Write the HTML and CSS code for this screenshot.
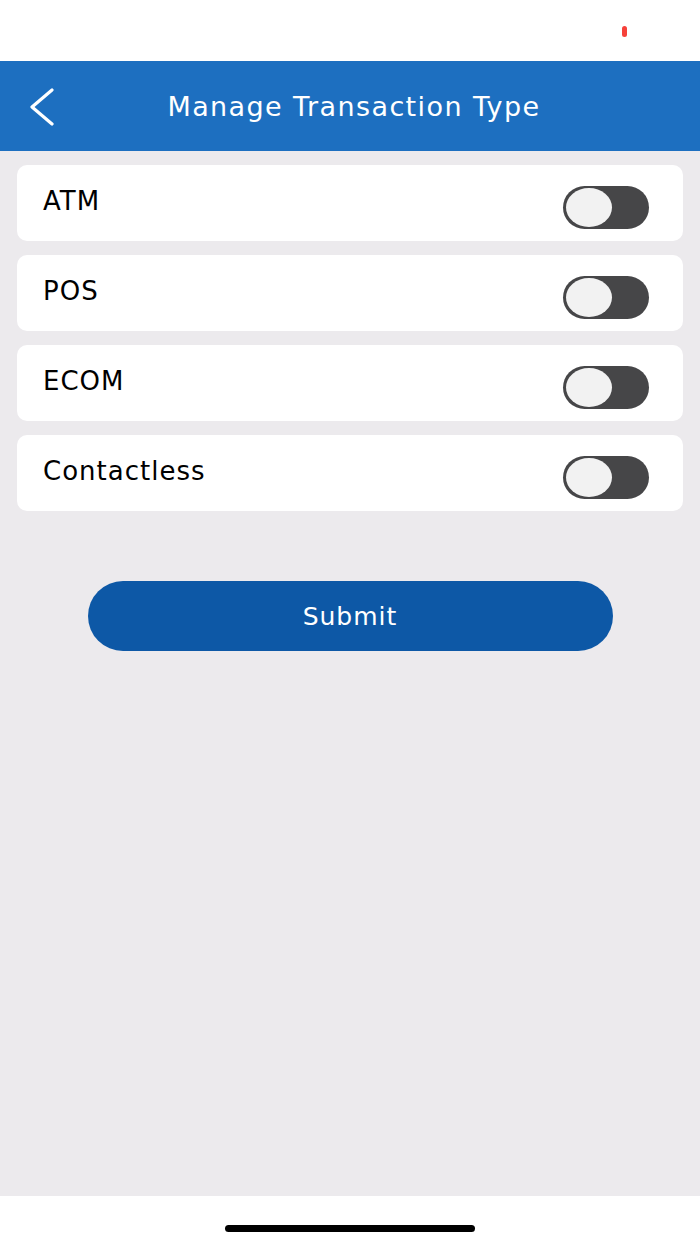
FILE: index.html
```html
<!DOCTYPE html>
<html>
<head>
<meta charset="utf-8">
<link rel="stylesheet" href="styles.css">
</head>
<body>
<div class="screen">
  <div class="status-bar"><span class="rec-dot"></span></div>
  <header class="nav">
    <button class="back" aria-label="Back">
      <svg width="28" height="38" viewBox="0 0 28 38"><path d="M25 2 L5 19 L25 36" fill="none" stroke="#fff" stroke-width="3.2" stroke-linecap="round" stroke-linejoin="round"/></svg>
    </button>
    <h1 class="title">Manage Transaction Type</h1>
  </header>
  <main class="content">
    <div class="list">
      <div class="row"><span class="label">ATM</span><span class="toggle"><span class="knob"></span></span></div>
      <div class="row"><span class="label">POS</span><span class="toggle"><span class="knob"></span></span></div>
      <div class="row"><span class="label">ECOM</span><span class="toggle"><span class="knob"></span></span></div>
      <div class="row"><span class="label">Contactless</span><span class="toggle"><span class="knob"></span></span></div>
    </div>
    <div class="actions">
      <button class="submit">Submit</button>
    </div>
  </main>
  <footer class="home-bar"><span class="indicator"></span></footer>
</div>
</body>
</html>
```

FILE: styles.css
```css
* { box-sizing: border-box; }
html, body { margin: 0; padding: 0; }
body {
  font-family: "DejaVu Sans", sans-serif;
  background: #ECEAED;
}
.screen {
  width: 700px;
  height: 1244px;
  display: flex;
  flex-direction: column;
  background: #ECEAED;
}
.status-bar {
  height: 61px;
  background: #fff;
  display: flex;
  justify-content: flex-end;
  padding: 26px 73px 0 0;
}
.rec-dot {
  width: 5px;
  height: 11px;
  border-radius: 3px;
  background: #F6413A;
}
.nav {
  height: 90px;
  background: #1D6FC0;
  display: flex;
  align-items: center;
  position: relative;
}
.back {
  background: none;
  border: 0;
  padding: 0;
  margin-left: 27px;
  margin-top: 2px;
  display: flex;
}
.title {
  margin: 0;
  position: absolute;
  left: 0;
  right: 0;
  text-align: center;
  padding-left: 8px;
  font-weight: 400;
  font-size: 27px;
  letter-spacing: 1.4px;
  color: #fff;
  pointer-events: none;
}
.content {
  flex: 1;
  padding: 14px 17px 0;
}
.list {
  display: flex;
  flex-direction: column;
  gap: 14px;
}
.row {
  height: 76px;
  background: #fff;
  border-radius: 10px;
  display: flex;
  align-items: center;
  justify-content: space-between;
  padding: 0 34px 0 26px;
}
.label {
  font-size: 26px;
  letter-spacing: 1px;
  color: #000;
  margin-top: -4px;
}
.toggle {
  width: 86px;
  height: 43px;
  border-radius: 22px;
  background: #464648;
  margin-top: 8px;
  padding: 2px 3px;
  display: flex;
  align-items: center;
}
.knob {
  width: 46px;
  height: 39px;
  border-radius: 50%;
  background: #F2F2F2;
}
.actions {
  display: flex;
  justify-content: center;
  padding-top: 70px;
}
.submit {
  width: 525px;
  height: 70px;
  border: 0;
  border-radius: 35px;
  background: #0D58A6;
  color: #fff;
  font-family: "DejaVu Sans", sans-serif;
  font-size: 25px;
  letter-spacing: 1px;
}
.home-bar {
  height: 48px;
  background: #fff;
  display: flex;
  justify-content: center;
  padding-top: 29px;
}
.indicator {
  width: 250px;
  height: 7px;
  border-radius: 4px;
  background: #000;
}
```
